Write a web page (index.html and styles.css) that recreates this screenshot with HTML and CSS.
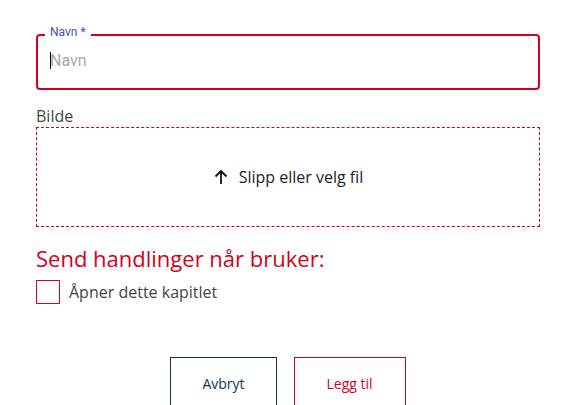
FILE: index.html
```html
<!DOCTYPE html>
<html lang="no">
<head>
<meta charset="utf-8">
<link rel="stylesheet" href="styles.css">
</head>
<body>
<form class="form">
  <div class="field">
    <span class="field-label">Navn<span class="req"> *</span></span>
    <div class="field-box">
      <span class="caret"></span>
      <input class="field-input" type="text" placeholder="Navn">
    </div>
  </div>

  <div class="upload">
    <div class="upload-label">Bilde</div>
    <div class="dropzone">
      <svg class="upload-icon" width="16" height="16" viewBox="0 0 16 16" aria-hidden="true">
        <path d="M8 15V2M2.5 7.5L8 2l5.5 5.5" fill="none" stroke="#111" stroke-width="1.8"/>
      </svg>
      <span>Slipp eller velg fil</span>
    </div>
  </div>

  <h2 class="section-title">Send handlinger når bruker:</h2>
  <label class="check-row">
    <span class="checkbox"></span>
    <span class="check-text">Åpner dette kapitlet</span>
  </label>

  <div class="actions">
    <button type="button" class="btn btn-cancel">Avbryt</button>
    <button type="button" class="btn btn-add">Legg til</button>
  </div>
</form>
</body>
</html>
```

FILE: styles.css
```css
html, body {
  margin: 0;
  padding: 0;
  background: #fff;
}

body {
  font-family: "Open Sans", "Liberation Sans", sans-serif;
  overflow: hidden;
}

.form {
  display: flex;
  flex-direction: column;
  padding: 34px 33px 0 36px;
}

.field {
  position: relative;
}

.field-box {
  position: relative;
  height: 56px;
  box-sizing: border-box;
  border: 2px solid #d0021b;
  border-radius: 4px;
  display: flex;
  align-items: center;
  padding: 0 12px;
}

.field-label {
  position: absolute;
  top: -9px;
  left: 9px;
  z-index: 1;
  padding: 0 5px;
  background: #fff;
  font-family: Roboto, "Liberation Sans", sans-serif;
  font-size: 12px;
  line-height: 14px;
  color: #3f51b5;
}

.field-input {
  flex: 1;
  border: none;
  outline: none;
  padding: 0;
  margin: 0 0 4px 0;
  font-family: Roboto, "Liberation Sans", sans-serif;
  font-size: 16px;
  line-height: 23px;
  color: #222;
  background: transparent;
}

.field-input::placeholder {
  color: #a6a6a6;
  opacity: 1;
}

.caret {
  position: absolute;
  left: 12px;
  top: 16px;
  width: 1px;
  height: 17px;
  background: #000;
}

.upload {
  margin-top: 15px;
  display: flex;
  flex-direction: column;
}

.upload-label {
  font-size: 16px;
  line-height: 22px;
  color: #444;
}

.dropzone {
  height: 100px;
  box-sizing: border-box;
  border: 1px dashed #d0021b;
  display: flex;
  align-items: center;
  justify-content: center;
  gap: 10px;
  font-size: 16px;
  color: #222;
}

.upload-icon {
  display: block;
}

.section-title {
  margin: 16px 0 0 0;
  font-size: 22px;
  font-weight: 400;
  line-height: 30px;
  color: #d0021b;
}

.check-row {
  margin-top: 7px;
  display: flex;
  align-items: center;
  gap: 9px;
}

.checkbox {
  width: 24px;
  height: 24px;
  box-sizing: border-box;
  border: 1px solid #d0021b;
}

.check-text {
  font-size: 16px;
  line-height: 22px;
  color: #444;
}

.actions {
  margin-top: 53px;
  display: flex;
  justify-content: center;
  gap: 17px;
}

.btn {
  height: 52px;
  padding: 0 31px;
  background: #fff;
  font-family: "Open Sans", "Liberation Sans", sans-serif;
  font-size: 14px;
  cursor: pointer;
}

.btn-cancel {
  border: 1px solid #0b3753;
  color: #0b3753;
}

.btn-add {
  border: 1px solid #d0021b;
  color: #d0021b;
  padding: 0 32px;
}
```
